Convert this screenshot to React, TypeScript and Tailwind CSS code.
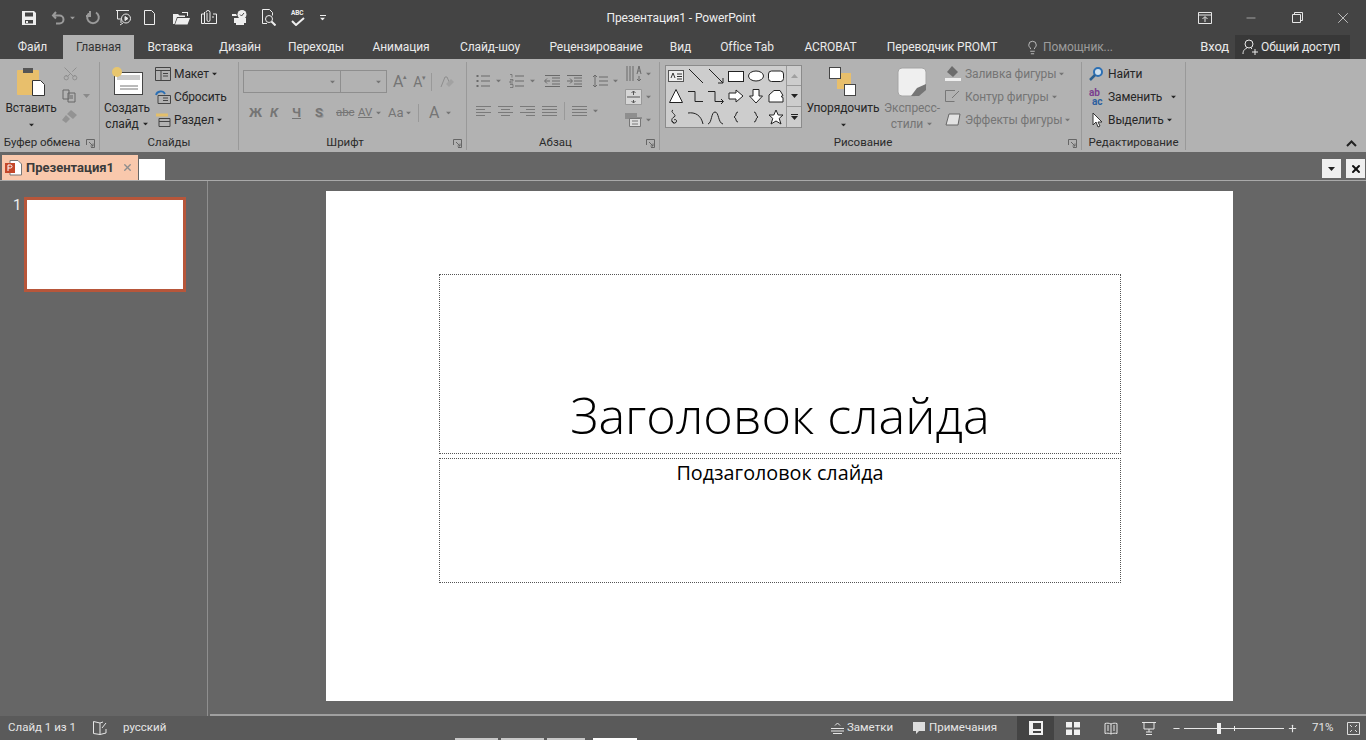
import type { ReactNode } from "react";
import { Lightbulb, Minus, Plus, Scissors, X } from "lucide-react";

const ui = "[font-family:'Roboto','Open_Sans',sans-serif]";

const Caret = ({ className = "" }: { className?: string }) => (
  <svg width="7" height="4" viewBox="0 0 7 4" className={`shrink-0 ${className}`}>
    <path d="M0 0h7L3.500 4z" fill="currentColor" />
  </svg>
);

const Ico = ({ w = 16, h = 16, children, className = "" }: { w?: number; h?: number; children: ReactNode; className?: string }) => (
  <svg width={w} height={h} viewBox={`0 0 ${w} ${h}`} fill="none" stroke="currentColor" className={`shrink-0 ${className}`}>
    {children}
  </svg>
);

const Sep = ({ className = "" }: { className?: string }) => <div className={`w-px bg-[#999] ${className}`} />;

const Launcher = () => (
  <svg width="9" height="9" viewBox="0 0 9 9" fill="none" stroke="#666" className="shrink-0">
    <path d="M.5 6V.5H8.500V8.500H5" />
    <path d="M3 3l4 4M7 4.500V7H4.500" />
  </svg>
);

const tabs: [string, string][] = [
  ["Файл", "w-[61px]"],
  ["Главная", "w-[71px] bg-[#b2b2b2] text-[#333]"],
  ["Вставка", "w-[72px]"],
  ["Дизайн", "w-[68px]"],
  ["Переходы", "w-[84px]"],
  ["Анимация", "w-[86px]"],
  ["Слайд-шоу", "w-[92px]"],
  ["Рецензирование", "w-[120px]"],
  ["Вид", "w-[49px]"],
  ["Office Tab", "w-[84px]"],
  ["ACROBAT", "w-[83px]"],
  ["Переводчик PROMT", "w-[140px]"],
];

const Group = ({ className, label, children, launcher }: { className: string; label: string; children: ReactNode; launcher?: boolean }) => (
  <div className={`flex h-[88px] shrink-0 flex-col border-r border-[#999] ${className}`}>
    <div className="flex h-[74px] items-start">{children}</div>
    <div className={`relative flex h-[13px] items-center justify-center text-[11.500px] leading-none tracking-normal text-[#2b2b2b] ${launcher ? "pr-[15px]" : ""}`}>
      <span>{label}</span>
      {launcher && (
        <span className="absolute top-[3px] right-[4px]">
          <Launcher />
        </span>
      )}
    </div>
  </div>
);

const Row = ({ icon, text, off, caret, gap = "gap-[4px]", caretClass = "ml-[2px]" }: { icon: ReactNode; text: string; off?: boolean; caret?: boolean; gap?: string; caretClass?: string }) => (
  <div className={`flex h-[23px] items-center whitespace-nowrap ${gap} ${off ? "text-[#757575]" : "text-[#262626]"}`}>
    {icon}
    <span className="flex items-center pt-[1px]">
      {text}
      {caret && <Caret className={`scale-75 ${caretClass}`} />}
    </span>
  </div>
);

function Gallery() {
  const s = { stroke: "#222", strokeWidth: 1 };
  const cells: ReactNode[] = [
    <g key="a"><rect x="1.500" y="2.500" width="15" height="11" fill="#eee" stroke="#555" /><path d="M4 10l2-5 2 5M10 6h5M10 8.500h5M10 11h5" stroke="#333" /></g>,
    <path key="b" d="M2 1l14 14" {...s} />,
    <path key="c" d="M2 1l14 14M16 10v5h-5" {...s} />,
    <rect key="d" x="1.500" y="3.500" width="15" height="10" fill="#fff" {...s} />,
    <ellipse key="e" cx="9" cy="8" rx="7.500" ry="5" fill="#fff" {...s} />,
    <rect key="f" x="1.500" y="3" width="15" height="10.500" rx="3" fill="#fff" {...s} />,
    <path key="g" d="M9 1.500l6.500 13h-13z" fill="#fff" {...s} />,
    <path key="h" d="M1 3.500h7v10h8" {...s} />,
    <path key="i" d="M1 3.500h7v10h8M14 11l2.500 2.500-2.500 2.500" {...s} />,
    <path key="j" d="M2 5h7V2l7 6-7 6v-3H2z" fill="#fff" {...s} />,
    <path key="k" d="M6 1.500h6V8h3.500L9 15 2.500 8H6z" fill="#fff" {...s} />,
    <path key="l" d="M7 2.500h6l3 5-2 1 2 1v4.500H2V7z" fill="#fff" {...s} />,
    <path key="m" d="M6 1c-4 2 5 5 1 7s-2 7 1 6 1-5-1-3M5 12l2 2" {...s} />,
    <path key="n" d="M1 4c7-1 13 2 15 11" {...s} />,
    <path key="o" d="M1 15c4-1 3-12 7-12s3 11 8 12" {...s} />,
    <path key="p" d="M11 3c-3 0-1 4-4 5 3 1 1 5 4 5" {...s} />,
    <path key="q" d="M7 3c3 0 1 4 4 5-3 1-1 5-4 5" {...s} />,
    <path key="r" d="M9 1l2.200 5H16l-3.800 3.400L14 15l-5-3-5 3 1.800-5.600L2 6h4.800z" fill="#fff" {...s} />,
  ];
  return (
    <div className="mt-[3px] ml-[5px] flex h-[63px] w-[137px] border border-[#8b8b8b] bg-[#cdcdcd]">
      <div className="grid w-[120px] grid-cols-6 grid-rows-3 place-items-center">
        {cells.map((c, i) => (
          <svg key={i} width="18" height="16" viewBox="0 0 18 16" fill="none">
            {c}
          </svg>
        ))}
      </div>
      <div className="flex w-[15px] flex-col border-l border-[#9a9a9a] text-[#222]">
        <div className="flex h-[20px] items-center justify-center border-b border-[#9a9a9a] text-[#a0a0a0]">
          <Caret className="rotate-180" />
        </div>
        <div className="flex h-[21px] items-center justify-center border-b border-[#9a9a9a]">
          <Caret />
        </div>
        <div className="flex flex-1 flex-col items-center justify-center gap-[1px]">
          <div className="h-px w-[7px] bg-[#222]" />
          <Caret />
        </div>
      </div>
    </div>
  );
}

const ListIcon = ({ numbered }: { numbered?: boolean }) => (
  <Ico w={16} h={16}>
    <path d="M6 3h9M6 8h9M6 13h9" stroke="#6a6a6a" />
    {numbered ? (
      <path d="M1 1.500h2v3M1 6.500h3v1.500H1v2h3M1 11.500h3v3H1" stroke="#666" strokeWidth=".7" />
    ) : (
      <path d="M1.500 3h2M1.500 8h2M1.500 13h2" stroke="#6a6a6a" strokeWidth="2" />
    )}
  </Ico>
);

const AlignIcon = ({ d }: { d: string }) => (
  <Ico w={15} h={12}>
    <path d={d} stroke="#7a7a7a" />
  </Ico>
);

export default function App() {
  return (
    <div className={`relative flex h-[740px] w-[1366px] flex-col overflow-hidden bg-[#666] text-[12px] tracking-[-0.1px] ${ui}`}>
      {/* title bar */}
      <div className="flex h-[35px] shrink-0 items-center bg-[#444] text-white">
        <div className="flex w-[336px] items-center">
          <div className="ml-[21px] w-[30px]">
            <svg width="16" height="16" viewBox="0 0 16 16" fill="#eee">
              <path fillRule="evenodd" d="M1 1h12l2 2v12H1zM4 2.500v4h8v-4zM4 10v3.500h8V10zM5 11h2v2H5z" />
            </svg>
          </div>
          <div className="flex w-[34px] items-center gap-[4px] text-[#9a9a9a]">
            <Ico w={14} h={14}>
              <path d="M5 1L2 4.500 5 7.500M2 4.500h6.500a4 4 0 0 1 0 8H5" strokeWidth="2" />
            </Ico>
            <Caret className="scale-75" />
          </div>
          <div className="w-[30px] text-[#9a9a9a]">
            <Ico w={16} h={16}>
              <path d="M11 2.500a5.800 5.800 0 1 1-6 0M5 1v5H1" strokeWidth="2" />
            </Ico>
          </div>
          <div className="flex w-[28px] text-[#e8e8e8]">
            <Ico w={17} h={17}>
              <path d="M1 1.500h13M2.500 2v8H7M8 14l-3 2M6 11v3" />
              <circle cx="11" cy="9.500" r="4.500" />
              <path d="M10 7.500l3 2-3 2z" fill="currentColor" />
            </Ico>
          </div>
          <div className="flex w-[30px] text-[#eee]">
            <Ico w={13} h={15}>
              <path d="M1.500 .5h7l3 3v11h-10z" />
            </Ico>
          </div>
          <div className="flex w-[28px] text-[#eee]">
            <svg width="17" height="14" viewBox="0 0 17 14" fill="currentColor">
              <path d="M0 3h5l1.500 1.500H12V6H4L1.500 13H0zM4.500 7H17l-2.500 6.500H2zM9 1h6v4h-1V2H9z" />
            </svg>
          </div>
          <div className="flex w-[30px] text-[#eee]">
            <Ico w={16} h={15}>
              <path d="M3.500 2v11.500h12V4H12M3 4H.5v9.500H3M6 3v7a1.500 1.500 0 0 0 3 0V2.500a2 2 0 0 0-4 0M11 7h2" />
            </Ico>
          </div>
          <div className="flex w-[30px] text-[#eee]">
            <svg width="17" height="15" viewBox="0 0 17 15" fill="currentColor">
              <path d="M3 8h12v5h-2v2H5v-2H3zM1 4h4l1 2H1z" />
              <circle cx="11" cy="4.500" r="4.500" />
              <path d="M9 4.500l1.500 1.500 2.500-3" stroke="#444" fill="none" />
            </svg>
          </div>
          <div className="flex w-[30px] text-[#eee]">
            <Ico w={15} h={17}>
              <path d="M1.500 14.500v-14h7l3 3v3M1.500 14.500H6" />
              <circle cx="8" cy="10" r="3.500" />
              <path d="M10.500 12.500l4 4" strokeWidth="2" />
            </Ico>
          </div>
          <div className="flex w-[28px] flex-col items-start text-[#eee]">
            <span className="text-[6.500px] leading-[7px] font-bold">ABC</span>
            <Ico w={14} h={9}>
              <path d="M1 4l4 4 8-7" strokeWidth="2" />
            </Ico>
          </div>
          <div className="flex flex-col items-center gap-[1px] text-[#eee]">
            <div className="h-px w-[6px] bg-current" />
            <Caret className="scale-75" />
          </div>
        </div>
        <div className="w-[690px] pt-[1px] text-center whitespace-nowrap text-[#eee]">Презентация1 - PowerPoint</div>
        <div className="ml-auto flex w-[184px] items-center text-[#e6e6e6]">
          <div className="flex w-[46px] justify-center">
            <Ico w={14} h={12}>
              <path d="M.5 .5h13v11H.5zM.5 3h13M7 10V5M4.500 7L7 4.500 9.500 7" />
            </Ico>
          </div>
          <div className="flex w-[46px] justify-center">
            <Minus size={14} strokeWidth={1} />
          </div>
          <div className="flex w-[46px] justify-center">
            <Ico w={11} h={11}>
              <path d="M.5 2.500h8v8h-8zM2.500 2.500v-2h8v8h-2" />
            </Ico>
          </div>
          <div className="flex w-[46px] justify-center">
            <X size={18} strokeWidth={1} />
          </div>
        </div>
      </div>

      {/* tabs */}
      <div className="flex h-[24px] shrink-0 items-stretch bg-[#444] pl-[2px] text-[#eaeaea]">
        {tabs.map(([t, c]) => (
          <div key={t} className={`flex items-center justify-center whitespace-nowrap ${c}`}>
            {t}
          </div>
        ))}
        <div className="ml-[13px] flex items-center gap-[3px] text-[#9c9c9c]">
          <Lightbulb size={15} strokeWidth={1.200} className="text-[#ddd]" />
          <span>Помощник...</span>
        </div>
        <div className="ml-auto flex items-center">
          <span className="mr-[6px] text-[13px]">Вход</span>
          <div className="mr-[16px] flex h-full w-[115px] items-center gap-[3px] bg-[#383838] pl-[7px]">
            <Ico w={16} h={16}>
              <circle cx="7" cy="5" r="4" />
              <path d="M1 15c0-4 2-5 4-6M9 9l1 1M10 13h6M13 10v6" />
            </Ico>
            <span>Общий доступ</span>
          </div>
        </div>
      </div>

      {/* ribbon */}
      <div className="flex h-[93px] shrink-0 items-start bg-[#b2b2b2] pt-[3px] text-[#262626]">
        <Group className="w-[100px]" label="Буфер обмена" launcher>
          <div className="flex w-[62px] flex-col items-center pt-[3px]">
            <svg width="30" height="33" viewBox="0 0 30 33" className="ml-[2px] shrink-0">
              <rect y="5" width="22" height="25" rx="1" fill="#e8bf6c" />
              <rect x="6" y="3" width="10" height="5" fill="#555" />
              <path d="M15.500 15.500h8l4 4v11h-12z" fill="#fff" stroke="#333" />
            </svg>
            <span className="mt-[2px] leading-[16px]">Вставить</span>
            <Caret className="mt-[7px] scale-75" />
          </div>
          <div className="flex flex-col gap-[7px] pt-[3px] text-[#8a8a8a]">
            <Scissors size={17} strokeWidth={1.200} className="-rotate-90" />
            <div className="flex items-center gap-[6px]">
              <Ico w={15} h={14}>
                <path d="M1 1h6v9H1zM6 4h7v9H6zM8 7h3M8 9h3" stroke="#666" />
              </Ico>
              <Caret />
            </div>
            <svg width="16" height="14" viewBox="0 0 16 14" fill="#939393">
              <path d="M9 0l6 5-4 4-6-5zM4 5l4 4-4 4-4-3z" />
            </svg>
          </div>
        </Group>
        <Group className="w-[139px]" label="Слайды">
          <div className="flex w-[54px] flex-col items-center pt-[3px]">
            <svg width="32" height="31" viewBox="0 0 32 31" className="shrink-0">
              <rect x="3.500" y="7.500" width="28" height="22" fill="#fff" stroke="#444" />
              <rect x="6" y="10" width="23" height="5" fill="#ccc" />
              <path d="M9 21h18M9 24h18" stroke="#777" />
              <circle cx="6" cy="7" r="5" fill="#e8c66e" />
            </svg>
            <span className="mt-[4px] leading-[16px]">Создать</span>
            <span className="flex items-center gap-[3px] leading-[16px]">
              слайд
              <Caret className="scale-75" />
            </span>
          </div>
          <div className="ml-[1px] flex flex-col">
            <Row
              gap="gap-[3px]"
              text="Макет"
              caret
              icon={
                <Ico w={16} h={14}>
                  <path d="M.5 .5h15v13H.5zM.5 3.500h15M6 3.500v10M8 6.500h5M8 9h5" stroke="#444" />
                </Ico>
              }
            />
            <Row
              gap="gap-[3px]"
              text="Сбросить"
              icon={
                <Ico w={16} h={14}>
                  <path d="M3 5.500h12.500v8H3zM8 8h5M8 10.500h5" stroke="#444" />
                  <path d="M1 5c1-4 7-5 9-1" stroke="#2b6fb4" strokeWidth="1.800" />
                </Ico>
              }
            />
            <Row
              gap="gap-[3px]"
              text="Раздел"
              caret
              icon={
                <Ico w={16} h={15}>
                  <path d="M4 6.500h11v8H4zM4 9.500h11" stroke="#444" />
                  <path d="M1 3h12" stroke="#e3bf6b" strokeWidth="3" />
                </Ico>
              }
            />
          </div>
        </Group>
        <Group className="w-[228px]" label="Шрифт" launcher>
          <div className="flex w-full flex-col pt-[8px] pl-[4px] text-[#757575]">
            <div className="flex h-[23px] items-center">
              <div className="flex h-[23px] w-[98px] items-center justify-end border border-[#8e8e8e] pr-[4px]">
                <Caret className="scale-75" />
              </div>
              <div className="flex h-[23px] w-[46px] items-center justify-end border border-l-0 border-[#8e8e8e] pr-[4px]">
                <Caret className="scale-75" />
              </div>
              <span className="ml-[6px] flex items-start text-[16px] leading-none">
                A<span className="text-[7px] leading-none">▴</span>
              </span>
              <span className="ml-[6px] flex items-start text-[14px] leading-none">
                A<span className="text-[7px] leading-none">▾</span>
              </span>
              <Sep className="ml-[5px] h-[18px]" />
              <svg width="14" height="14" viewBox="0 0 14 14" className="ml-[8px] opacity-60">
                <path d="M1 12L5 2h2l3 7" stroke="#777" fill="none" />
                <path d="M6 9l5-5 3 3-5 5z" fill="#999" />
              </svg>
            </div>
            <div className="mt-[8px] flex h-[23px] items-center pl-[6px] font-bold">
              <span className="w-[21px] text-[13px]">Ж</span>
              <span className="w-[22px] text-[13px] italic">К</span>
              <span className="w-[23px] text-[13px] underline">Ч</span>
              <span className="w-[21px] text-[13px] [text-shadow:1px_1px_0_#999]">S</span>
              <span className="w-[22px] text-[11.500px] font-normal line-through">abc</span>
              <span className="flex w-[30px] items-center gap-[3px] text-[11.500px] font-normal underline">
                AV
                <Caret className="scale-75" />
              </span>
              <span className="flex w-[30px] items-center gap-[2px] text-[13px] font-normal">
                Аа
                <Caret className="scale-75" />
              </span>
              <Sep className="h-[18px]" />
              <span className="ml-[10px] text-[16px] font-normal">A</span>
              <Caret className="ml-[6px] scale-75" />
            </div>
          </div>
        </Group>
        <Group className="w-[193px]" label="Абзац" launcher>
          <div className="flex w-full pl-[8px] text-[#757575]">
            <div className="flex w-[150px] flex-col pt-[11px]">
              <div className="flex h-[16px] items-center">
                <ListIcon />
                <Caret className="mr-[7px] ml-[4px] scale-75" />
                <ListIcon numbered />
                <Caret className="mr-[8px] ml-[4px] scale-75" />
                <Ico w={17} h={12} className="mr-[5px]">
                  <path d="M1 6h5M3 3.500L.5 6 3 8.500M8 3h8M8 6h8M8 9h8M1 .5h15M1 11.500h15" stroke="#6a6a6a" />
                </Ico>
                <Ico w={17} h={12} className="mr-[9px]">
                  <path d="M1 6h5M4 3.500L6.500 6 4 8.500M8 3h8M8 6h8M8 9h8M1 .5h15M1 11.500h15" stroke="#6a6a6a" />
                </Ico>
                <Ico w={17} h={14}>
                  <path d="M3 1v12M1 3l2-2 2 2M1 11l2 2 2-2M7 3h9M7 7h9M7 11h9" stroke="#6a6a6a" />
                </Ico>
                <Caret className="ml-[3px] scale-75" />
              </div>
              <div className="mt-[14px] flex h-[16px] items-center gap-[7px] pl-[1px]">
                <AlignIcon d="M0 1.500h15M0 4.500h9M0 7.500h15M0 10.500h9" />
                <AlignIcon d="M0 1.500h15M3 4.500h9M0 7.500h15M3 10.500h9" />
                <AlignIcon d="M0 1.500h15M6 4.500h9M0 7.500h15M6 10.500h9" />
                <AlignIcon d="M0 1.500h15M0 4.500h15M0 7.500h15M0 10.500h15" />
                <Sep className="h-[18px]" />
                <AlignIcon d="M0 1.500h15M0 4.500h15M0 7.500h15M0 10.500h15" />
                <Caret className="-ml-[2px] scale-75" />
              </div>
            </div>
            <div className="flex flex-col gap-[6px] pt-[3px]">
              <div className="flex h-[17px] items-center gap-[3px]">
                <Ico w={17} h={17}>
                  <path d="M2 1v15M5 1v15M8 1v15M12 9l2-8 2 8M13 6h2M14 11v5M12 14l2 2 2-2" stroke="#6a6a6a" />
                </Ico>
                <Caret className="scale-75" />
              </div>
              <div className="flex h-[17px] items-center gap-[3px]">
                <Ico w={17} h={16}>
                  <path d="M.5 .5h16v15H.5z" fill="#d6d6d6" stroke="#999" />
                  <path d="M8.500 2v4M6.500 4l2-2 2 2M2 8h13M8.500 14v-3M6.500 12l2 2 2-2" stroke="#555" />
                </Ico>
                <Caret className="scale-75" />
              </div>
              <div className="flex h-[17px] items-center gap-[3px]">
                <Ico w={17} h={16}>
                  <path d="M0 1h12v4h5v2H0z" fill="#8e8e8e" stroke="none" />
                  <path d="M4.500 6.500h11v8h-11z" fill="#ddd" stroke="#777" />
                  <path d="M7 9h6M7 12h6" stroke="#777" />
                </Ico>
                <Caret className="scale-75" />
              </div>
            </div>
          </div>
        </Group>
        <Group className="w-[422px]" label="Рисование" launcher>
          <Gallery />
          <div className="ml-[5px] flex w-[72px] flex-col items-center pt-[5px]">
            <svg width="28" height="29" viewBox="0 0 28 29" className="shrink-0">
              <rect x="8" y="6" width="14" height="16" fill="#e8bf6c" />
              <rect x=".5" y=".5" width="11" height="11" fill="#fff" stroke="#444" />
              <rect x="15.500" y="17.500" width="11" height="11" fill="#fff" stroke="#444" />
            </svg>
            <span className="mt-[4px] leading-[16px]">Упорядочить</span>
            <Caret className="mt-[7px] scale-75" />
          </div>
          <div className="ml-[3px] flex w-[60px] flex-col items-center pt-[5px] text-[#757575]">
            <svg width="30" height="30" viewBox="0 0 30 30" className="shrink-0">
              <path d="M5 1h20q4 0 4 4v14L18 29H5q-4 0-4-4V5q0-4 4-4z" fill="#efefef" stroke="#a5a5a5" />
              <path d="M14 29l6-8 9-4v6l-7 6z" fill="#757575" />
            </svg>
            <span className="mt-[3px] leading-[16px]">Экспресс-</span>
            <span className="flex items-center gap-[3px] leading-[16px]">
              стили
              <Caret className="scale-75" />
            </span>
          </div>
          <div className="ml-[3px] flex flex-col">
            <Row
              off
              text="Заливка фигуры"
              caret
              icon={
                <svg width="16" height="15" viewBox="0 0 16 15">
                  <path d="M7 0l6 6-5 5-6-5z" fill="#6c6c6c" />
                  <rect y="12" width="16" height="3" fill="#eee" />
                </svg>
              }
            />
            <Row
              off
              text="Контур фигуры"
              caret
              icon={
                <Ico w={15} h={13} className="mr-[1px]">
                  <path d="M10 .5H.5v11h9M14 1L7 8" stroke="#777" />
                </Ico>
              }
            />
            <Row
              off
              text="Эффекты фигуры"
              caret
              icon={
                <svg width="16" height="13" viewBox="0 0 16 13">
                  <path d="M4 1h11l-2 11H1z" fill="#e2e2e2" stroke="#666" />
                </svg>
              }
            />
          </div>
        </Group>
        <Group className="w-[104px]" label="Редактирование">
          <div className="flex flex-col pl-[7px]">
            <Row
              gap="gap-[5px]"
              text="Найти"
              icon={
                <svg width="14" height="14" viewBox="0 0 14 14" fill="none">
                  <circle cx="9" cy="5" r="4" stroke="#2b6fb4" strokeWidth="2" fill="#cfe0ee" />
                  <path d="M6 8l-5 5" stroke="#2b5f8f" strokeWidth="2.500" />
                </svg>
              }
            />
            <Row
              gap="gap-[5px]"
              text="Заменить"
              caret
              caretClass="ml-[8px]"
              icon={
                <span className="flex w-[14px] flex-col text-[10px] leading-[9px] font-bold">
                  <span className="text-[#7a3f8f]">ab</span>
                  <span className="pl-[3px] text-[#2b5f9f]">ac</span>
                </span>
              }
            />
            <Row
              gap="gap-[5px]"
              text="Выделить"
              caret
              icon={
                <svg width="14" height="16" viewBox="0 0 14 16" className="mr-[-3px] ml-[3px]">
                  <path d="M1 1v12l3-3 2 5 2-1-2-4h4z" fill="#fff" stroke="#333" />
                </svg>
              }
            />
          </div>
        </Group>
        <div className="flex h-[88px] flex-1 items-end justify-end pr-[9px] pb-[3px]">
          <svg width="11" height="7" viewBox="0 0 11 7" fill="none" stroke="#222" strokeWidth="2">
            <path d="M1 6l4.500-4.500L10 6" />
          </svg>
        </div>
      </div>

      {/* document tabs */}
      <div className="flex h-[29px] shrink-0 items-end border-b border-[#a9a9a9] pl-[2px]">
        <div className="flex h-[25px] w-[136px] items-center bg-[#f9c8ac] pl-[3px] text-[#3b3b3b]">
          <svg width="17" height="16" viewBox="0 0 17 16" className="shrink-0">
            <path d="M5 .5h8l3.500 3.500v11H5z" fill="#fff" stroke="#777" />
            <rect y="3" width="10" height="10" fill="#c4472a" />
            <path d="M3 11V5h2.500a1.500 1.500 0 0 1 0 3H3" stroke="#fff" fill="none" />
          </svg>
          <span className="ml-[4px] pt-[1px] text-[13px] font-bold tracking-normal">Презентация1</span>
          <X size={11} strokeWidth={3} className="mr-[5px] ml-auto text-[#8d8d8d]" />
        </div>
        <div className="ml-px h-[21px] w-[26px] bg-white" />
        <div className="mb-[2px] ml-auto flex gap-[5px] pr-px">
          <div className="flex h-[19px] w-[19px] items-center justify-center bg-[#efefef] text-[#222]">
            <Caret />
          </div>
          <div className="flex h-[19px] w-[19px] items-center justify-center bg-[#efefef] text-[#111]">
            <X size={12} strokeWidth={4} />
          </div>
        </div>
      </div>

      {/* workspace */}
      <div className="flex min-h-0 flex-1">
        <div className="w-[208px] shrink-0 border-r border-[#8f8f8f]">
          <div className="mt-[16px] flex items-start">
            <span className="w-[24px] pl-[13px] text-[15px] leading-[16px] text-[#eee]">1</span>
            <div className="h-[95px] w-[162px] border-[3px] border-[#b7563a] bg-white" />
          </div>
        </div>
        <div className="flex min-w-0 flex-1 flex-col">
          <div className="flex flex-1 pt-[10px] pl-[118px]">
            <div className="flex h-[510px] w-[907px] flex-col bg-white px-[113px] pt-[83px] font-['Open_Sans',sans-serif] tracking-normal text-black">
              <div className="flex h-[180px] w-[682px] items-end justify-center border border-dotted border-[#555] pb-[6px] text-[50.400px] leading-[64px] font-light whitespace-nowrap">
                Заголовок слайда
              </div>
              <div className="mt-[4px] h-[125px] w-[682px] border border-dotted border-[#555] text-center text-[19.800px] leading-[28px]">
                Подзаголовок слайда
              </div>
            </div>
          </div>
          <div className="ml-[2px] h-[2px] bg-[#a0a0a0]" />
        </div>
      </div>

      {/* status bar */}
      <div className="flex h-[24px] shrink-0 items-center bg-[#5a5a5a] text-[11.500px] tracking-normal text-[#e6e6e6]">
        <span className="ml-[8px] w-[84px]">Слайд 1 из 1</span>
        <Ico w={16} h={14}>
          <path d="M8 2L1.500 .5v12L8 13.500l6-1.500V8M8 2v11.500M8 2l3-1M10 7l4-5" />
        </Ico>
        <span className="ml-[15px]">русский</span>
        <div className="ml-auto flex h-full items-center">
          <Ico w={13} h={12} className="mr-[3px]">
            <path d="M0 6.500h13M0 9h13M2 11.500h9M4 3.500L6.500 1 9 3.500" />
          </Ico>
          <span className="w-[66px]">Заметки</span>
          <svg width="12" height="12" viewBox="0 0 12 12" fill="#ddd" className="mr-[4px]">
            <path d="M0 0h12v9H6l-3 3V9H0z" />
          </svg>
          <span className="w-[88px]">Примечания</span>
          <div className="flex h-[24px] w-[37px] items-center justify-center bg-[#444]">
            <svg width="14" height="14" viewBox="0 0 14 14" fill="#f0f0f0">
              <path fillRule="evenodd" d="M0 0h14v14H0zM4 2v6h8V2zM4 10v2h8v-2z" />
            </svg>
          </div>
          <div className="flex w-[37px] justify-center">
            <svg width="14" height="13" viewBox="0 0 14 13" fill="#f0f0f0">
              <path d="M0 0h6v5.500H0zM8 0h6v5.500H8zM0 7.500h6V13H0zM8 7.500h6V13H8z" />
            </svg>
          </div>
          <div className="flex w-[39px] justify-center">
            <Ico w={14} h={13}>
              <path d="M7 2C5 1 3 1 1 1.500v10C3 11 5 11 7 12c2-1 4-1 6-.5v-10C11 1 9 1 7 2zM7 2v10M3 4h2M3 6h2M3 8h2M9 4h2M9 6h2M9 8h2" />
            </Ico>
          </div>
          <div className="flex w-[37px] justify-center">
            <Ico w={14} h={14}>
              <path d="M0 1.500h14M2 2v6h10V2M7 8v3M4 13.500h6M4 11h6" />
            </Ico>
          </div>
          <Minus size={9} strokeWidth={3} className="ml-[5px]" />
          <div className="relative ml-[3px] h-px w-[100px] bg-[#e8e8e8]">
            <div className="absolute -top-[5px] left-[33px] h-[11px] w-[4px] bg-[#eee]" />
            <div className="absolute -top-[2px] left-[50px] h-[5px] w-px bg-[#eee]" />
          </div>
          <Plus size={11} strokeWidth={2.500} className="ml-[3px]" />
          <span className="ml-[14px] w-[35px]">71%</span>
          <Ico w={13} h={13} className="mr-[6px]">
            <path d="M.5 .5h12v12H.5zM3 3l2 2M10 3L8 5M3 10l2-2M10 10L8 8" stroke="#ddd" />
          </Ico>
        </div>
      </div>

      {/* edge of the taskbar previews under the window */}
      <div className="absolute bottom-0 left-[455px] flex h-[2px] gap-[3px]">
        <div className="w-[43px] bg-[#c8c8c8]" />
        <div className="w-[43px] bg-[#c8c8c8]" />
        <div className="w-[38px] bg-[#c8c8c8]" />
        <div className="ml-[5px] w-[44px] bg-white" />
      </div>
    </div>
  );
}
